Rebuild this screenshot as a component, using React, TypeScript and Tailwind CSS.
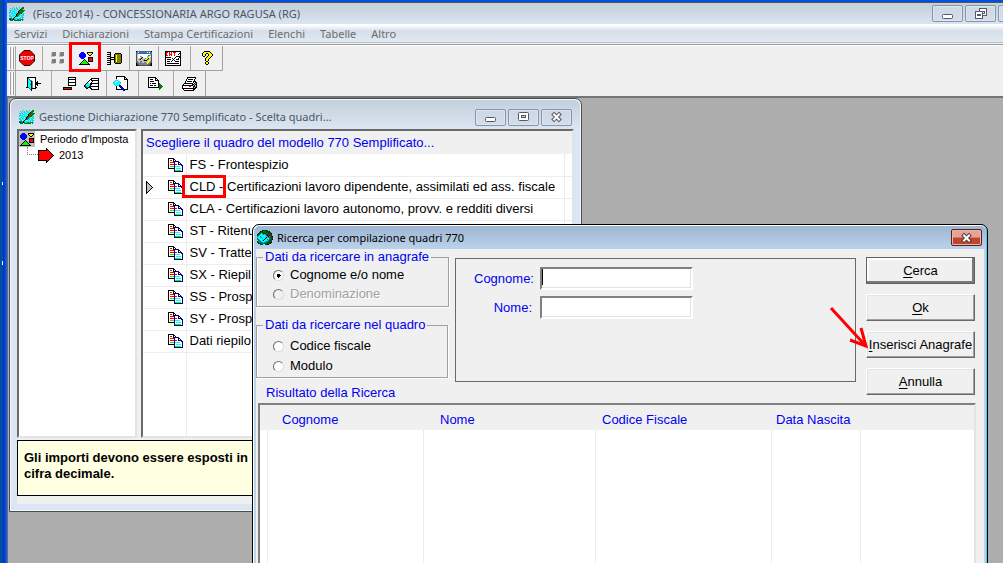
import React, { useState } from "react";

const PALETTE: Record<string, string> = {
  K: "#000000",
  W: "#ffffff",
  G: "#808080",
  L: "#c0c0c0",
  R: "#ff0000",
  B: "#0000ff",
  N: "#000080",
  C: "#00ffff",
  Y: "#ffff00",
  E: "#00ff00",
  D: "#008000",
  F: "#004d1a",
  O: "#808000",
  T: "#008080",
  S: "#3a6ea5",
  M: "#505050",
  A: "#20c8d8",
};

/* Small bitmap icon: one character per pixel, a dot is transparent. */
function Bitmap({ rows, className = "" }: { rows: string[]; className?: string }) {
  const width = Math.max(...rows.map((r) => r.length));
  const rects: React.ReactElement[] = [];
  rows.forEach((row, y) => {
    let x = 0;
    while (x < row.length) {
      let end = x + 1;
      while (end < row.length && row[end] === row[x]) end++;
      if (PALETTE[row[x]]) {
        rects.push(<rect key={`${x}-${y}`} x={x} y={y} width={end - x} height={1} fill={PALETTE[row[x]]} />);
      }
      x = end;
    }
  });
  return (
    <svg
      width={width}
      height={rows.length}
      viewBox={`0 0 ${width} ${rows.length}`}
      shapeRendering="crispEdges"
      className={`shrink-0 ${className}`}
      aria-hidden="true"
    >
      {rects}
    </svg>
  );
}

const SQUARES = [
  ".GGGG....GGGG",
  "LGGGG...LGGGG",
  "LGGGG...LGGGG",
  "LGGGG...LGGGG",
  "LLLL....LLLL.",
  ".............",
  ".............",
  ".GGGG....GGGG",
  "LGGGG...LGGGG",
  "LGGGG...LGGGG",
  "LGGGG...LGGGG",
  "LLLL....LLLL.",
];

const SHAPES = [
  "..BBB...KKKKKK",
  ".BBBBB..KYYYYK",
  "BBBBBBB..KYYK.",
  "BBBBBBB...KK..",
  "BBBBBBB.......",
  ".BBBBB...KKKKK",
  "..BBB....KRRRK",
  ".....K...KRRRK",
  "....KEK..KRRRK",
  "...KEEEK.KKKKK",
  "..KEEEEEK.....",
  ".KEEEEEEEK....",
  "KKKKKKKKKKK...",
];

const BARREL = [
  "KKKK...........",
  "...K....KKKKKK.",
  "KKKK...KOOOOOOK",
  "...K...KOYOOOOK",
  "KKKK...KOYOOOOK",
  "...KKKKKOYOOOOK",
  "KKKK...KOYOOOOK",
  "...KKKKKOYOOOOK",
  "KKKK...KOYOOOOK",
  "...K...KOYOOOOK",
  "KKKK...KOOOOOOK",
  "...K....KKKKKK.",
  "KKKK...........",
];

const FORM_EDIT = [
  "KSSSSSSSSSSSSSSK",
  "SSWSSSSSSSSWSWSS",
  "SSSSSSSSSSSSSSSS",
  "MLWWWWWWWWWWWWLM",
  "MLWWWWWWWWWWSSLM",
  "MLWWGLWWWWWACYWM",
  "MLWWWGKWWWWCYYLM",
  "MLLLGKLLLGYYKLLM",
  "MLLGKLLLGYYKLLLM",
  "MLLLLLLGKKKLLYLM",
  "MGLLGGLLLLLLYYGM",
  "MGGLGGLLGGLYYGGM",
  "KMGGGGGGGGGYGGMK",
  "KMMGGGGGGGGGMMMK",
  "KKMMMMMMMMMMMMKK",
];

const CNT_SHEET = [
  "KKKKKKKKKKKKKKKK",
  "KRRWRWRWRRRWWWWK",
  "KRWWRWRWWRWWWWKK",
  "KRWWRRRWWRWWWKWK",
  "KRRWRWRWWRWWWWWK",
  "KWWWWWWWWWWKKKKK",
  "KKKKKKWWWWKWWWKK",
  "KWWWWWWKWKWWWKWK",
  "KWKKKKWWKWWKKKWK",
  "KWWWWWWKWKWWWWWK",
  "KWKKKWKWWWKKKKWK",
  "KWWWWWWWWWWWWWWK",
  "KWKKKKKKKKKKKKWK",
  "KWWWWWWWWWWWWWWK",
  "KKKKKKKKKKKKKKKK",
];

const HELP = [
  "...KKKKKK...",
  "..KYYYYYYK..",
  ".KYYYKKYYYK.",
  ".KYYK..KYYYK",
  ".KYYK..KYYYK",
  "..KK..KYYYK.",
  ".....KYYYK..",
  "....KYYYK...",
  "....KYYK....",
  "....KYYK....",
  ".....KK.....",
  "....KYYK....",
  "....KYYK....",
  ".....KK.....",
];

const DOOR = [
  ".KKKKKKKKK.....",
  ".KTWWWWWWK.....",
  ".KCTWWWWWK.....",
  ".KCCTGWWWK.....",
  ".KCCCKGWWK.K...",
  ".KCCCKGWWKKK...",
  ".KCCCKGWWKKKKKK",
  ".KCCTKGWWKKK...",
  ".KCCCKGWWK.K...",
  ".KCCCKGWWK.....",
  "KKTCCKGWWKK....",
  "...TCKKKKK.....",
  "....TK.........",
  ".....K.........",
];

const LIST_RED = [
  ".....KKKKKKKK",
  ".....KWWWWWWK",
  ".....KKKKKKKK",
  ".....KWWWWWWK",
  ".....KWWWWWWK",
  ".....KKKKKKKK",
  ".....KWWWWWWK",
  ".....KWWWWWWK",
  ".....KKKKKKKK",
  ".............",
  "KKKKKKKKK....",
  "KRRRRRRRK....",
  "KKKKKKKKK....",
];

const LIST_ERASE = [
  ".......KKKKKKKK",
  "......KKWWWWWWK",
  ".....KWKKKKKKKK",
  "....KWWWKWWWWWK",
  "...KWWWKWWWWWWK",
  "..KCCWKKKKKKKKK",
  ".KCCCCKKWWWWWWK",
  "KTCCCCKWWWWWWWK",
  "KTTCCKKKKKKKKKK",
  ".KTTKKKWWWWWWWK",
  "..KK..KKWWWWWWK",
  ".......KKKKKKKK",
];

const FIND_DOC = [
  "...KKKKKKKKK....",
  "...KWWWWWWWKK...",
  "...KWWWWWWWKWK..",
  "...LWWWWWWWKKKK.",
  "..ACALWWWWWWWWK.",
  ".ACWWCAWWWWWWWK.",
  "ACWCCCCAWWWWWWK.",
  "ACCCCCCAWWWWWWK.",
  ".ACCCCAWWWWWWWK.",
  "..ACCANNWWWWWWK.",
  "...KWWNBNWWWWWK.",
  "...KWWWNBNWWWWK.",
  "...KWWWWNBNWWWK.",
  "...KKKKKKNBNKKK.",
  "..........NN....",
];

const RUN_DOC = [
  "KKKKKKKK........",
  "KWWWWWWKK.......",
  "KWKKKWWKWK......",
  "KWWWWWWKKKK.....",
  "KWKKKKWWWWK.....",
  "KWWWWWWWWWK.....",
  "KWKWKKKKWWKD....",
  "KWWWWWWWWWKDD...",
  "KWKKKWKKWWKDDD..",
  "KWWWWWWWWWKDDDD.",
  "KKKKKKKKKKKDDD..",
  "...........DD...",
  "...........D....",
];

const PRINTER = [
  ".....KKKKKKKKK..",
  ".....KWWWWWWWK..",
  "....KWKKKKKWK...",
  "....KWWWWWWWK...",
  "...KWKKKKKWKKK..",
  "...KWWWWWWWKWKK.",
  "..KKKKKKKKKWKLK.",
  ".KWWWWWWWWKKLKK.",
  "KKKKKKKKKKKLKLK.",
  "KWWWWWWRRWWKKLK.",
  "KWWWWWWWWWWKLKK.",
  "KKKKKKKKKKKKKK..",
  ".KWWWWWWWWWKK...",
  "..KKKKKKKKKK....",
];

const DOCS = [
  "KKKKKK.........",
  "KWWWWKK........",
  "KWRRWKWK.......",
  "KWWWWKKNNNN....",
  "KWRRRRNWWWNN...",
  "KWWWWWNWWWNWN..",
  "KWRRRRNRRWNNNN.",
  "KWWWWWNWWWWWWNN",
  "KWEEEENCCCCCWWN",
  "KWWWWWNWWWWWWWN",
  "KKKKKKNWCCCCCWN",
  "......NWWWWWWWN",
  "......NEEEEEEWN",
  "......NNNNNNNNN",
];

const ROW_MARK = [
  "K......",
  "KK.....",
  "KLK....",
  "KLLK...",
  "KLLLK..",
  "KLLLLK.",
  "KLLLLLK",
  "KLLLLK.",
  "KLLLK..",
  "KLLK...",
  "KLK....",
  "KK.....",
  "K......",
];

const TREE_ARROW = [
  "........K.......",
  "........KK......",
  "KKKKKKKKKRK.....",
  "KRRRRRRRRRRK....",
  "KRRRRRRRRRRRK...",
  "KRRRRRRRRRRRRK..",
  "KRRRRRRRRRRRRRK.",
  "KRRRRRRRRRRRRRRK",
  "KRRRRRRRRRRRRRK.",
  "KRRRRRRRRRRRRK..",
  "KRRRRRRRRRRRK...",
  "KRRRRRRRRRRK....",
  "KKKKKKKKKRK.....",
  "........KK......",
  "........K.......",
];

const FEATHER = [
  "....A..A..A..DD.",
  ".A.A.A.AA.C.DDD.",
  "..A.CAC.ACCKDD..",
  "AACA.CCA.CKDDTDD",
  ".A.CACC.CKRDDDD.",
  "AACA.CCACKDDRT..",
  "A.CCCACCKRDDDCA.",
  ".CACC.CKDDTC.AA.",
  "AA.CACCKRTCCACA.",
  "ACACC.KDTCA.CA..",
  ".AA.CKC.CC.ACAA.",
  "TTDAKACACCAA.A..",
  "DKTDKDACDTADTTA.",
  ".TDD.TDDTDDD.T..",
];

const GLOBE = [
  ".....KFFFFF.....",
  "...KFFDDFFFFK...",
  "..FFDFFFDFFFFF..",
  ".FFTATFFFFDFFFK.",
  "KFTACCTATFFFRFF.",
  "FTACCACCATKRBFF.",
  "TACTCCCCCARKTFFK",
  "ACCATCCCAKCTTRFF",
  "TACCCACCKACCTTFF",
  "TTACCCAKCCTATFFK",
  ".TTACAKCCCATFFF.",
  "FTTTACCCATTTFFF.",
  "FFTTTTATTTFFFFK.",
  ".FFFTTTTFFFFFK..",
  "...FFF..FFKK....",
];

function StopIcon() {
  return (
    <svg width="16" height="16" viewBox="0 0 16 16" className="shrink-0" aria-hidden="true">
      <path d="M5 .5h6L15.500 5v6L11 15.500H5L.5 11V5z" fill="#f00000" stroke="#200000" />
      <text x="8" y="10" textAnchor="middle" fontSize="5" fontWeight="700" fontFamily="Liberation Sans, sans-serif" fill="#fff">
        STOP
      </text>
    </svg>
  );
}

type Glyph = "min" | "max" | "restore" | "close";

function CaptionGlyph({ kind, light }: { kind: Glyph; light?: boolean }) {
  const ink = light ? "#5a3a3a" : "#535a66";
  return (
    <svg width="13" height="12" viewBox="0 0 13 12" aria-hidden="true">
      {kind === "min" && <rect x="1.500" y="6.500" width="10" height="4" rx="1" fill="#fff" stroke={ink} />}
      {kind === "max" && (
        <g fill="#fff" stroke={ink}>
          <rect x="1.500" y="1.500" width="10" height="8" rx="1" />
          <rect x="4.500" y="4.500" width="4" height="2" fill="#c5d0dc" />
        </g>
      )}
      {kind === "restore" && (
        <g fill="#fff" stroke={ink}>
          <rect x="5.500" y=".5" width="7" height="7" />
          <rect x="8.500" y="3.500" width="2" height="2" />
          <rect x="1.500" y="3.500" width="7" height="7" />
          <rect x="3.500" y="6.500" width="3" height="1" />
        </g>
      )}
      {kind === "close" && (
        <g strokeLinecap="square" fill="none">
          <path d="M4 3.500l5 5M9 3.500l-5 5" stroke={ink} strokeWidth="4" />
          <path d="M4 3.500l5 5M9 3.500l-5 5" stroke="#fff" strokeWidth="2" />
        </g>
      )}
    </svg>
  );
}

function CaptionButton({ kind, label }: { kind: Glyph; label: string }) {
  return (
    <button
      type="button"
      aria-label={label}
      className="flex h-[17px] w-[31px] shrink-0 items-center justify-center rounded-[2px] border border-[#8496aa] bg-linear-to-b from-[#cdd8e4] to-[#d3deea] shadow-[inset_0_0_0_1px_#dde6ef]"
    >
      <CaptionGlyph kind={kind} />
    </button>
  );
}

function Grip() {
  return (
    <div className="flex w-[9px] justify-end gap-px py-px pr-px">
      <span className="w-[2px] border-r border-[#a0a0a0] bg-white" />
      <span className="w-[2px] border-r border-[#a0a0a0] bg-white" />
    </div>
  );
}

function Tool({ label, className, children }: { label: string; className: string; children: React.ReactNode }) {
  return (
    <button type="button" aria-label={label} className={`flex items-center justify-center ${className}`}>
      {children}
    </button>
  );
}

const MENU = ["Servizi", "Dichiarazioni", "Stampa Certificazioni", "Elenchi", "Tabelle", "Altro"];

const FORMS: [string, string][] = [
  ["FS -", "Frontespizio"],
  ["CLD -", "Certificazioni lavoro dipendente, assimilati ed ass. fiscale"],
  ["CLA -", "Certificazioni lavoro autonomo, provv. e redditi diversi"],
  ["ST -", "Ritenu"],
  ["SV -", "Tratte"],
  ["SX -", "Riepil"],
  ["SS -", "Prosp"],
  ["SY -", "Prosp"],
  ["Dati", "riepilo"],
];

function SelectionWindow() {
  return (
    <section className="absolute top-0 left-px flex h-[414px] w-[573px] flex-col rounded-t-[7px] border border-[#4c4c4c] bg-[#dae6f3] px-[7px] pb-[7px] shadow-[inset_0_0_0_1px_#f4f8fc]">
      <header className="-mx-[6px] mt-px flex h-[29px] shrink-0 items-center rounded-t-[6px] bg-linear-to-b from-[#c3cfdc] to-[#dbe6f2] pt-[5px] pr-[8px] pl-[8px]">
        <Bitmap rows={FEATHER} />
        <h2 className="ml-1 flex-1 font-['Noto_Sans',sans-serif] text-[11px] leading-4 whitespace-nowrap text-[#4a5663]">
          Gestione Dichiarazione 770 Semplificato - Scelta quadri...
        </h2>
        <div className="flex gap-[2px]">
          <CaptionButton kind="min" label="Riduci a icona" />
          <CaptionButton kind="max" label="Ingrandisci" />
          <CaptionButton kind="close" label="Chiudi" />
        </div>
      </header>
      <div className="flex min-h-0 flex-1 flex-col bg-[#f0f0f0]">
        <div className="flex h-[309px] gap-1">
          <div className="w-[120px] shrink-0 border-2 border-t-[#6b6b6b] border-r-[#e3e3e3] border-b-[#e3e3e3] border-l-[#6b6b6b] bg-white">
            <div className="flex h-4 items-center gap-[5px]">
              <span className="flex size-4 shrink-0 items-center justify-center bg-[#c0c0c0]">
                <Bitmap rows={SHAPES} />
              </span>
              <span className="text-[11px] leading-4 whitespace-nowrap">Periodo d'Imposta</span>
            </div>
            <div className="flex h-4 items-center pl-2">
              <span className="mb-2 h-2 w-[11px] shrink-0 border-b border-l border-dotted border-[#808080]" />
              <Bitmap rows={TREE_ARROW} />
              <span className="ml-[5px] text-[11px] leading-4">2013</span>
            </div>
          </div>
          <div className="flex min-w-0 flex-1 flex-col border-2 border-t-[#6b6b6b] border-r-[#e3e3e3] border-b-[#e3e3e3] border-l-[#6b6b6b] bg-white">
            <table className="h-full w-full table-fixed border-collapse text-left">
              <colgroup>
                <col className="w-[43px]" />
                <col />
                <col className="w-[7px]" />
              </colgroup>
              <thead>
                <tr className="h-[23px] bg-[#f0f0f0]">
                  <th colSpan={3} className="p-0 pl-[3px] text-[13px] leading-5 font-normal whitespace-nowrap text-[#0000f0]">
                    Scegliere il quadro del modello 770 Semplificato...
                  </th>
                </tr>
              </thead>
              <tbody>
                {FORMS.map(([code, title], i) => (
                  <tr key={code} className="h-[22px] border-b border-[#ececec]">
                    <td className="border-r border-[#ececec] p-0">
                      <span className="flex items-center justify-between pr-[3px] pl-[3px]">
                        {i === 1 ? <Bitmap rows={ROW_MARK} /> : <span />}
                        <Bitmap rows={DOCS} />
                      </span>
                    </td>
                    <td className="border-r border-[#ececec] p-0 pl-[3px] text-[13px] leading-5 whitespace-nowrap">
                      <span className="relative">
                        {code}
                        {i === 1 && (
                          <span className="pointer-events-none absolute -top-[4px] -right-[3px] -bottom-1 -left-2 border-3 border-[#ff0000]" />
                        )}
                      </span>{" "}
                      {title}
                    </td>
                    <td className="p-0" />
                  </tr>
                ))}
                <tr>
                  <td className="border-r border-[#ececec] p-0" />
                  <td className="border-r border-[#ececec] p-0" />
                  <td className="p-0" />
                </tr>
              </tbody>
            </table>
          </div>
        </div>
        <p className="mt-[2px] h-14 border border-black bg-[#ffffe1] px-[6px] pt-[9px] text-[13px] leading-4 font-bold">
          Gli importi devono essere esposti in
          <br />
          cifra decimale.
        </p>
      </div>
    </section>
  );
}

function Radio({
  id,
  label,
  checked,
  disabled,
  onPick,
}: {
  id: string;
  label: string;
  checked: boolean;
  disabled?: boolean;
  onPick: (id: string) => void;
}) {
  return (
    <div className="flex h-4 items-center gap-[6px]">
      <input
        id={id}
        type="radio"
        name="criterio"
        checked={checked}
        disabled={disabled}
        onChange={() => onPick(id)}
        className="size-[11px] shrink-0 appearance-none rounded-full border border-t-[#6b6b6b] border-r-[#dcdcdc] border-b-[#dcdcdc] border-l-[#6b6b6b] bg-white checked:bg-[radial-gradient(circle,#000_2px,#fff_2px)] disabled:bg-[#f0f0f0]"
      />
      <label
        htmlFor={id}
        className={
          disabled
            ? "text-[13px] leading-4 text-[#a0a0a0] [text-shadow:1px_1px_0_#fff]"
            : "text-[13px] leading-4 text-black"
        }
      >
        {label}
      </label>
    </div>
  );
}

function PushButton({ hot, rest, primary }: { hot: string; rest: string; primary?: boolean }) {
  return (
    <button
      type="button"
      className={
        primary
          ? "h-[27px] border border-[#606060] bg-[#f0f0f0] text-[13px] leading-5 whitespace-nowrap shadow-[inset_-2px_-2px_0_#7a7a7a,inset_2px_2px_0_#fff]"
          : "h-[27px] border border-t-white border-r-[#696969] border-b-[#696969] border-l-white bg-[#f0f0f0] text-[13px] leading-5 whitespace-nowrap shadow-[inset_-1px_-1px_0_#a0a0a0,inset_1px_1px_0_#e3e3e3]"
      }
    >
      <span className="underline underline-offset-2">{hot}</span>
      {rest}
    </button>
  );
}

const FIELD =
  "h-[23px] w-[153px] border-2 border-t-[#808080] border-r-white border-b-white border-l-[#808080] bg-white px-px text-[13px] shadow-[inset_-1px_-1px_0_#e3e3e3] outline-none";

function SearchDialog() {
  const [criterion, setCriterion] = useState("cognome");
  return (
    <section
      role="dialog"
      aria-labelledby="dialog-title"
      className="absolute top-[126px] -bottom-1 left-[244px] flex w-[736px] flex-col rounded-t-[7px] border border-black bg-[#bcd3ec] shadow-[inset_1px_1px_0_#fff,inset_-1px_0_0_#3fd0f0]"
    >
      <header className="mx-px mt-px flex h-[23px] shrink-0 items-center rounded-t-[6px] bg-linear-to-b from-[#9db5d2] to-[#bbd2eb] pr-[4px] pl-[3px]">
        <Bitmap rows={GLOBE} />
        <h2
          id="dialog-title"
          className="ml-1 flex-1 font-['Noto_Sans',sans-serif] text-[11px] leading-4 whitespace-nowrap text-black"
        >
          Ricerca per compilazione quadri 770
        </h2>
        <button
          type="button"
          aria-label="Chiudi"
          className="flex h-[17px] w-[31px] items-center justify-center rounded-[2px] border border-[#5a1f1c] bg-linear-to-b from-[#e3a498] from-45% to-[#c0452f] to-55% shadow-[inset_0_0_0_1px_#e9b6ab]"
        >
          <CaptionGlyph kind="close" light />
        </button>
      </header>
      <div className="mr-[3px] ml-[3px] flex min-h-0 flex-1 flex-col bg-[#f0f0f0]">
        <div className="flex pr-[9px]">
          <div className="flex w-[193px] shrink-0 flex-col gap-[10px]">
            <fieldset className="h-[58px] border border-[#a0a0a0] pl-4 shadow-[inset_1px_0_0_#fff,1px_1px_0_#fff]">
              <legend className="-ml-[10px] px-[2px] text-[13px] leading-4 text-[#0000f0]">Dati da ricercare in anagrafe</legend>
              <div className="flex flex-col gap-[3px] pt-[2px]">
                <Radio id="cognome" label="Cognome e/o nome" checked={criterion === "cognome"} onPick={setCriterion} />
                <Radio id="denominazione" label="Denominazione" disabled checked={false} onPick={setCriterion} />
              </div>
            </fieldset>
            <fieldset className="mr-px h-[61px] border border-[#a0a0a0] pl-4 shadow-[inset_1px_0_0_#fff,1px_1px_0_#fff]">
              <legend className="-ml-[10px] px-[2px] text-[13px] leading-4 text-[#0000f0]">Dati da ricercare nel quadro</legend>
              <div className="flex flex-col gap-1 pt-[5px]">
                <Radio id="codice" label="Codice fiscale" checked={criterion === "codice"} onPick={setCriterion} />
                <Radio id="modulo" label="Modulo" checked={criterion === "modulo"} onPick={setCriterion} />
              </div>
            </fieldset>
          </div>
          <div className="mt-[9px] ml-[6px] h-[124px] flex-1 border border-[#696969] pt-2 pl-[18px]">
            <div className="grid grid-cols-[58px_153px] items-center gap-x-2 gap-y-[6px] text-right text-[13px] leading-5 text-[#0000f0]">
              <label htmlFor="f-cognome">Cognome:</label>
              <div className="relative flex">
                <input id="f-cognome" type="text" autoFocus className={`${FIELD} caret-transparent`} />
                <span className="pointer-events-none absolute top-[2px] left-[2px] h-4 w-px bg-black" />
              </div>
              <label htmlFor="f-nome">Nome:</label>
              <input id="f-nome" type="text" className={FIELD} />
            </div>
          </div>
          <div className="mt-2 ml-[10px] flex w-[109px] shrink-0 flex-col gap-[10px]">
            <PushButton hot="C" rest="erca" primary />
            <PushButton hot="O" rest="k" />
            <PushButton hot="I" rest="nserisci Anagrafe" />
            <PushButton hot="A" rest="nnulla" />
          </div>
        </div>
        <h3 className="-mt-3 pl-[10px] text-[13px] leading-5 text-[#0000f0]">Risultato della Ricerca</h3>
        <div className="mr-[8px] ml-[2px] flex min-h-0 flex-1 border-t-2 border-r-2 border-l-2 border-t-[#808080] border-r-[#e3e3e3] border-l-[#808080] bg-white">
          <table className="h-full w-full table-fixed border-collapse text-left">
            <colgroup>
              <col className="w-[7px]" />
              <col className="w-[156px]" />
              <col className="w-[172px]" />
              <col className="w-[176px]" />
              <col className="w-[89px]" />
              <col />
            </colgroup>
            <thead>
              <tr className="h-[25px] bg-[#f0f0f0] text-[13px] leading-5 text-[#0000f0]">
                <th className="p-0" />
                <th className="p-0 pt-1 pl-[15px] font-normal">Cognome</th>
                <th className="p-0 pt-1 pl-[17px] font-normal">Nome</th>
                <th className="p-0 pt-1 pl-[7px] font-normal">Codice Fiscale</th>
                <th className="p-0 pt-1 pl-[5px] font-normal">Data Nascita</th>
                <th className="p-0" />
              </tr>
            </thead>
            <tbody>
              <tr>
                <td className="border-r border-[#ececec] p-0" />
                <td className="border-r border-[#ececec] p-0" />
                <td className="border-r border-[#ececec] p-0" />
                <td className="border-r border-[#ececec] p-0" />
                <td className="border-r border-[#ececec] p-0" />
                <td className="p-0" />
              </tr>
            </tbody>
          </table>
        </div>
      </div>
      <svg
        className="pointer-events-none absolute top-[80px] left-[574px]"
        width="44"
        height="46"
        viewBox="0 0 44 46"
        fill="none"
        stroke="#ff0000"
        strokeWidth="3"
        aria-hidden="true"
      >
        <path d="M4 3l33 36" />
        <path d="M34 23l5 18-16-6" />
      </svg>
    </section>
  );
}

export default function App() {
  return (
    <div className="flex h-screen overflow-hidden bg-[#f0f0f0] font-['Liberation_Sans',Arial,sans-serif] text-black">
      <div className="relative w-[7px] shrink-0 bg-linear-to-r from-[#00509a] from-40% via-[#0026d0] via-45% to-[#1b62ee]">
        <span className="absolute top-[182px] left-[2px] h-[3px] w-px bg-white" />
        <span className="absolute top-[261px] left-[2px] h-[4px] w-px bg-white" />
      </div>
      <div className="flex min-w-0 flex-1 flex-col border-t-2 border-[#0050e0]">
        <header className="flex h-[22px] shrink-0 items-center overflow-hidden border-t border-[#555] bg-linear-to-b from-[#c2ced9] to-[#dae5f1] pl-[2px]">
          <Bitmap rows={FEATHER} />
          <h1 className="ml-2 flex-1 font-['Noto_Sans',sans-serif] text-[11px] leading-4 whitespace-nowrap text-[#4a5663]">
            (Fisco 2014) - CONCESSIONARIA ARGO RAGUSA (RG)
          </h1>
          <div className="-mr-[26px] flex gap-[2px]">
            <CaptionButton kind="min" label="Riduci a icona" />
            <CaptionButton kind="restore" label="Ripristina" />
            <CaptionButton kind="close" label="Chiudi" />
          </div>
        </header>
        <nav className="flex h-[21px] shrink-0 items-center gap-[15px] border-b border-[#999] bg-linear-to-b from-white from-5% via-[#d5dfea] via-35% to-[#e4ebf3] pl-[7px] font-['Noto_Sans',sans-serif] text-[11px] leading-4 whitespace-nowrap text-[#6d6d6d] shadow-[inset_0_-1px_0_#f0f4f8,inset_0_-2px_0_#b4bdc9]">
          {MENU.map((item) => (
            <a key={item} href="#">
              {item}
            </a>
          ))}
        </nav>
        <div className="flex shrink-0 flex-col items-start border-t border-b-2 border-t-white border-b-[#757575] bg-[#f0f0f0]">
          <div className="flex h-[25px] divide-x divide-[#a8a8a8] border-r border-b border-[#a0a0a0]">
            <Grip />
            <Tool label="Esci" className="w-[27px] pr-1"><StopIcon /></Tool>
            <div className="flex">
              <Tool label="Finestre" className="w-[29px]"><Bitmap rows={SQUARES} /></Tool>
              <div className="relative flex">
                <Tool label="Dichiarazione" className="w-[28px]"><Bitmap rows={SHAPES} /></Tool>
                <span className="pointer-events-none absolute -top-1 -right-[1px] -bottom-[2px] -left-[3px] border-3 border-[#ff0000]" />
              </div>
              <Tool label="Archivi" className="w-[29px]"><Bitmap rows={BARREL} /></Tool>
            </div>
            <Tool label="Modifica modulo" className="w-[29px]"><Bitmap rows={FORM_EDIT} /></Tool>
            <Tool label="Scheda" className="w-[32px] pr-1"><Bitmap rows={CNT_SHEET} /></Tool>
            <Tool label="Aiuto" className="w-[31px]"><Bitmap rows={HELP} /></Tool>
          </div>
          <div className="flex h-[25px] divide-x divide-[#a8a8a8] border-r border-[#a0a0a0]">
            <Grip />
            <Tool label="Chiudi finestra" className="w-[36px]"><Bitmap rows={DOOR} /></Tool>
            <div className="flex gap-2 px-[7px] pl-[11px]">
              <Tool label="Elimina riga" className="w-[13px]"><Bitmap rows={LIST_RED} /></Tool>
              <Tool label="Cancella elenco" className="w-[15px]"><Bitmap rows={LIST_ERASE} /></Tool>
            </div>
            <Tool label="Cerca documento" className="w-[32px] pr-1"><Bitmap rows={FIND_DOC} /></Tool>
            <Tool label="Esegui" className="w-[35px]"><Bitmap rows={RUN_DOC} /></Tool>
            <Tool label="Stampa" className="w-[31px]"><Bitmap rows={PRINTER} /></Tool>
          </div>
        </div>
        <main className="relative min-h-0 flex-1 overflow-hidden border-l border-[#6b6b6b] bg-[#adadad]">
          <SelectionWindow />
          <SearchDialog />
        </main>
      </div>
    </div>
  );
}
